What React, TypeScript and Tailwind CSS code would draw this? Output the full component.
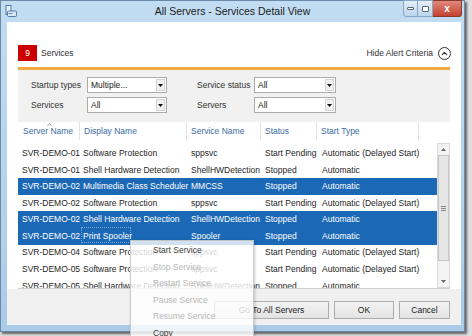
import { ChevronUp } from "lucide-react";

type Row = {
  server: string;
  display: string;
  service: string;
  status: string;
  start: string;
  selected?: boolean;
  focus?: boolean;
};

const rows: Row[] = [
  { server: "SVR-DEMO-01", display: "Software Protection", service: "sppsvc", status: "Start Pending", start: "Automatic (Delayed Start)" },
  { server: "SVR-DEMO-01", display: "Shell Hardware Detection", service: "ShellHWDetection", status: "Stopped", start: "Automatic" },
  { server: "SVR-DEMO-02", display: "Multimedia Class Scheduler", service: "MMCSS", status: "Stopped", start: "Automatic", selected: true },
  { server: "SVR-DEMO-02", display: "Software Protection", service: "sppsvc", status: "Start Pending", start: "Automatic (Delayed Start)" },
  { server: "SVR-DEMO-02", display: "Shell Hardware Detection", service: "ShellHWDetection", status: "Stopped", start: "Automatic", selected: true },
  { server: "SVR-DEMO-02", display: "Print Spooler", service: "Spooler", status: "Stopped", start: "Automatic", selected: true, focus: true },
  { server: "SVR-DEMO-04", display: "Software Protection", service: "sppsvc", status: "Start Pending", start: "Automatic (Delayed Start)" },
  { server: "SVR-DEMO-05", display: "Software Protection", service: "sppsvc", status: "Start Pending", start: "Automatic (Delayed Start)" },
  { server: "SVR-DEMO-05", display: "Shell Hardware Detection", service: "ShellHWDetection", status: "Stopped", start: "Automatic" },
];

const menuItems = [
  { label: "Start Service", enabled: true },
  { label: "Stop Service", enabled: false },
  { label: "Restart Service", enabled: false },
  { label: "Pause Service", enabled: false },
  { label: "Resume Service", enabled: false },
  { label: "Copy", enabled: true },
];

function Dropdown({ value, width }: { value: string; width: string }) {
  return (
    <div className={`${width} h-[16px] flex items-center bg-white border border-[#ababab]`}>
      <span className="flex-1 pl-[3px] text-[8.5px] text-[#222] leading-none">{value}</span>
      <span className="w-[9px] h-[12px] mr-[1px] flex items-center justify-center bg-[#f0f0f0] border border-[#d4d4d4]">
        <svg width="5" height="3" viewBox="0 0 5 3">
          <path d="M0 0 L5 0 L2.5 3 Z" fill="#111" />
        </svg>
      </span>
    </div>
  );
}

function Button({ label, width }: { label: string; width: string }) {
  return (
    <div
      className={`${width} h-[18px] flex items-center justify-center border border-[#adadad] bg-gradient-to-b from-[#f3f3f3] to-[#e3e3e3] text-[8.5px] text-[#222]`}
    >
      {label}
    </div>
  );
}

function ServicesList() {
  return (
    <div className="flex h-[149px] border-b border-[#cfcfcf]">
      <div className="flex-1 pt-[5px] overflow-hidden">
        {rows.map((r, i) => (
          <div
            key={i}
            className={`h-[16.6px] flex items-center text-[8.5px] whitespace-nowrap ${
              r.selected ? "bg-[#1b68b6] text-white" : "text-[#1e1e1e]"
            }`}
          >
            <span className="w-[65px] pl-[4px]">{r.server}</span>
            <span className="w-[108px] relative">
              {r.display}
              {r.focus && (
                <span className="absolute -left-[2px] -top-[3px] w-[50px] h-[16px] border border-dotted border-white/40" />
              )}
            </span>
            <span className="w-[74px] overflow-hidden">{r.service}</span>
            <span className="w-[57px]">{r.status}</span>
            <span>{r.start}</span>
          </div>
        ))}
      </div>
      <div className="w-[13px] mt-[3px] flex flex-col items-center bg-[#f4f4f4] border border-[#dadada]">
        <svg width="5" height="3" viewBox="0 0 5 3" className="mt-[4px]">
          <path d="M0 3 L5 3 L2.5 0 Z" fill="#666" />
        </svg>
        <div className="mt-[4px] w-[11px] h-[106px] flex items-center justify-center bg-[#e6e6e6] border border-[#c6c6c6]">
          <div className="flex flex-col gap-[1px]">
            <div className="w-[5px] h-[1px] bg-[#888]" />
            <div className="w-[5px] h-[1px] bg-[#888]" />
            <div className="w-[5px] h-[1px] bg-[#888]" />
          </div>
        </div>
        <div className="flex-1" />
        <svg width="5" height="3" viewBox="0 0 5 3" className="mb-[4px]">
          <path d="M0 0 L5 0 L2.5 3 Z" fill="#666" />
        </svg>
      </div>
    </div>
  );
}

export default function App() {
  return (
    <div
      className="relative w-[472px] h-[336px] overflow-hidden bg-[#dedede]"
      style={{ fontFamily: '"Liberation Sans", Arial, sans-serif' }}
    >
      <div className="w-[465px] h-[332px] flex flex-col bg-gradient-to-b from-[#c2ddf2] to-[#a9cbe8] border border-[#6a8aa8] shadow-[2px_2px_2px_rgba(0,0,0,0.55)]">
        {/* title bar */}
        <div className="relative h-[21px] flex items-center justify-center">
          <svg width="12" height="12" viewBox="0 0 12 12" className="absolute left-[4px] top-[4px]">
            <rect x="1" y="0.5" width="5" height="9" fill="#e8f2fb" stroke="#4d79a8" />
            <rect x="2.5" y="6" width="9" height="5.5" rx="1" fill="#d9e6f2" stroke="#5a7fa6" />
            <rect x="3.5" y="8" width="4" height="1" fill="#6b8fb3" />
          </svg>
          <span className="text-[10.5px] text-[#1b1b1b]">All Servers - Services Detail View</span>
          <div className="absolute right-[2px] top-[-1px] flex">
            <div className="w-[15px] h-[17px] flex items-center justify-center border border-[#8aa6c2] bg-gradient-to-b from-[#e2eef8] to-[#bdd5eb] rounded-bl-[3px]">
              <div className="w-[7px] h-[3px] border border-[#5a6876] bg-white rounded-[1px]" />
            </div>
            <div className="w-[15px] h-[17px] flex items-center justify-center border-y border-r border-[#8aa6c2] bg-gradient-to-b from-[#e2eef8] to-[#bdd5eb]">
              <div className="w-[7px] h-[6px] border border-[#5a6876] bg-white rounded-[1px]" />
            </div>
            <div className="w-[29px] h-[17px] flex items-center justify-center border-y border-r border-[#8a3a30] bg-gradient-to-b from-[#e0887a] to-[#c4402f] rounded-br-[3px] text-white text-[10px] font-bold leading-none">
              x
            </div>
          </div>
        </div>

        {/* client area */}
        <div className="ml-[6px] mr-[3px] mb-[6px] flex-1 flex flex-col bg-white">
          <div className="px-[11px]">
            <div className="mt-[23px] h-[16px] flex items-center">
              <div className="w-[19px] h-[16px] flex items-center justify-center bg-[#cc0000] text-white text-[8.5px]">9</div>
              <span className="ml-[4px] text-[8.5px] text-[#333]">Services</span>
              <div className="flex-1" />
              <span className="text-[8.5px] text-[#333]">Hide Alert Criteria</span>
              <div className="ml-[5px] mr-[-1px] w-[13px] h-[13px] rounded-full border-[1.5px] border-[#333] flex items-center justify-center">
                <ChevronUp size={9} strokeWidth={3} color="#333" />
              </div>
            </div>

            <div className="mt-[6px] h-[3px] bg-[#f2a83c]" />
            <div className="h-[52px] bg-[#f1f1f1] pt-[7px] flex flex-col gap-[4px] whitespace-nowrap">
              <div className="flex items-center">
                <span className="w-[69px] pl-[13px] text-[8.5px] text-[#333]">Startup types</span>
                <Dropdown value="Multiple..." width="w-[80px]" />
                <span className="w-[57px] ml-[30px] text-[8.5px] text-[#333]">Service status</span>
                <Dropdown value="All" width="w-[82px]" />
              </div>
              <div className="flex items-center">
                <span className="w-[69px] pl-[13px] text-[8.5px] text-[#333]">Services</span>
                <Dropdown value="All" width="w-[80px]" />
                <span className="w-[57px] ml-[30px] text-[8.5px] text-[#333]">Servers</span>
                <Dropdown value="All" width="w-[82px]" />
              </div>
            </div>

            <div className="h-[18px] flex text-[8.5px] text-[#3a6ea5] whitespace-nowrap">
              <div className="relative w-[62px] pl-[5px] flex items-center border-r border-[#e2e2e2]">
                Server Name
                <svg width="5" height="3" viewBox="0 0 5 3" className="absolute left-[29px] top-[1px]">
                  <path d="M0.5 3 L2.5 0.5 L4.5 3" fill="none" stroke="#7a8fa8" strokeWidth="0.8" />
                </svg>
              </div>
              <div className="w-[107px] pl-[4px] flex items-center border-r border-[#e2e2e2]">Display Name</div>
              <div className="w-[74px] pl-[4px] flex items-center border-r border-[#e2e2e2]">Service Name</div>
              <div className="w-[56px] pl-[4px] flex items-center border-r border-[#e2e2e2]">Status</div>
              <div className="w-[102px] pl-[4px] flex items-center border-r border-[#e2e2e2]">Start Type</div>
            </div>

            <ServicesList />
          </div>

          <div className="flex-1 bg-[#f0f0f0] flex justify-end items-start pt-[12px] pr-[11px] gap-[5px]">
            <Button label="Go To All Servers" width="w-[115px]" />
            <Button label="OK" width="w-[60px]" />
            <Button label="Cancel" width="w-[51px]" />
          </div>
        </div>
      </div>

      {/* context menu, fading in */}
      <div className="absolute left-[130px] top-[240px] w-[124px] h-[110px] pt-[1px] bg-white/80 border border-[#b8b8b8]/70 shadow-[1px_1px_3px_rgba(0,0,0,0.2)]">
        {menuItems.map((m) => (
          <div
            key={m.label}
            className={`h-[16.6px] pl-[22px] flex items-center text-[8.5px] ${m.enabled ? "text-[#3a3a3a]" : "text-[#b8b8b8]"}`}
          >
            {m.label}
          </div>
        ))}
      </div>
    </div>
  );
}
